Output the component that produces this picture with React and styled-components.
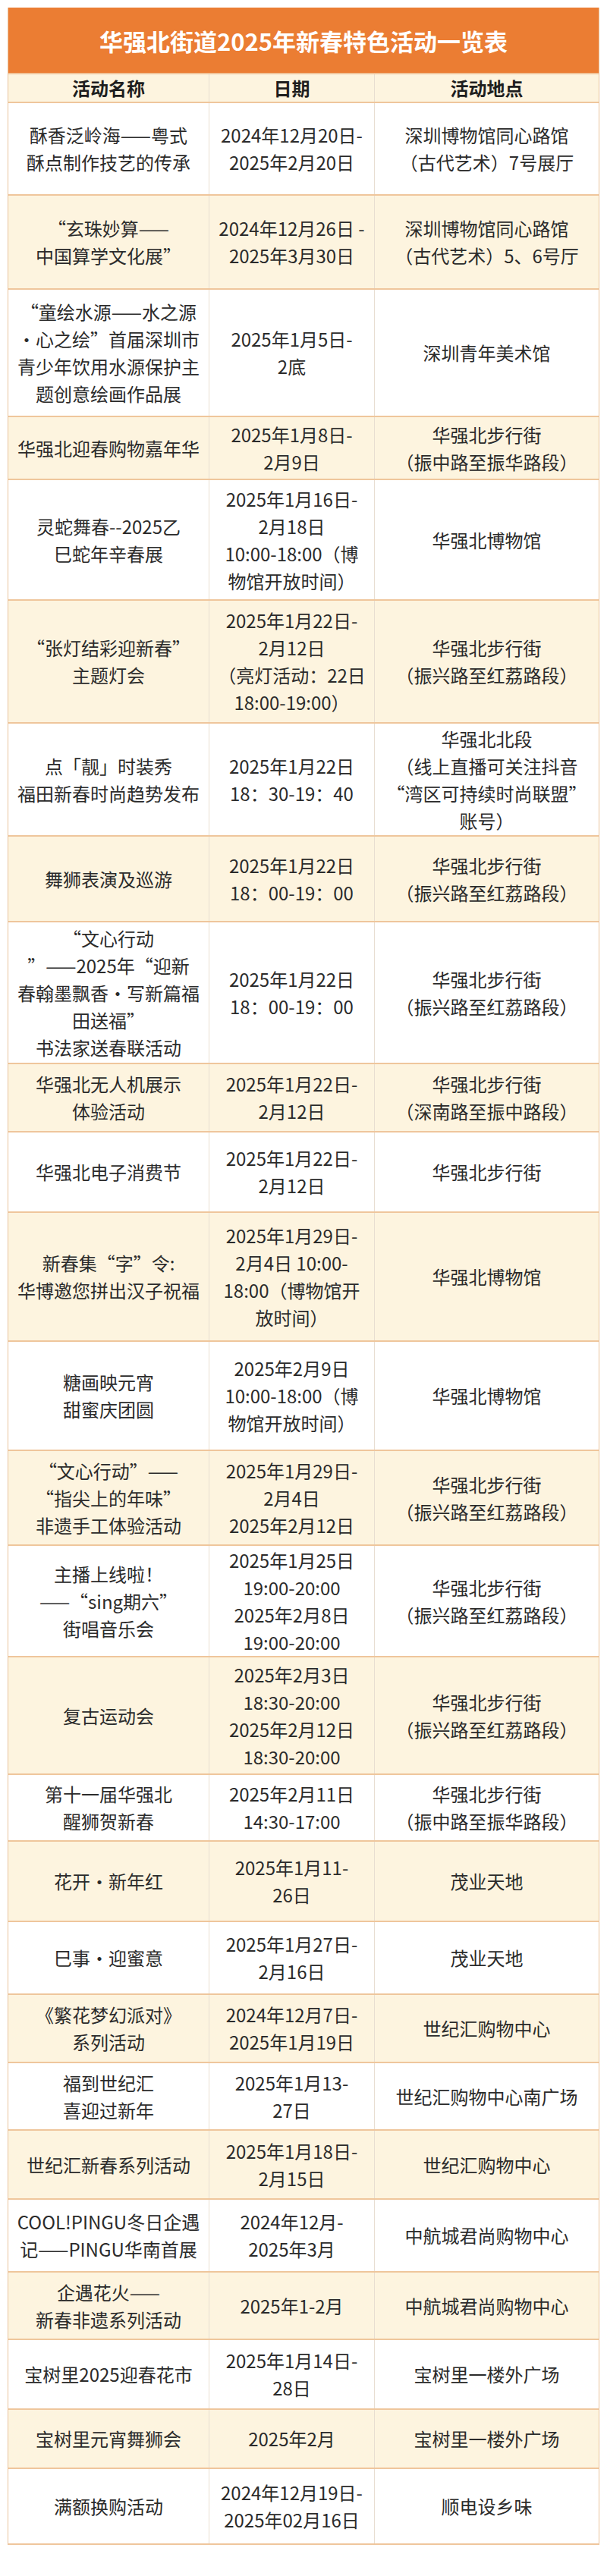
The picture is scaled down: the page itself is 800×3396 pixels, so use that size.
import React from "react";
import styled, { createGlobalStyle } from "styled-components";

const GlobalStyle = createGlobalStyle`
  html, body {
    margin: 0;
    padding: 0;
    background: #ffffff;
  }
  body {
    font-family: "Noto Sans CJK SC", "Noto Sans", sans-serif;
  }
`;

const Page = styled.div`
  width: 800px;
  min-height: 3396px;
  padding: 10px;
  box-sizing: border-box;
  background: #ffffff;
`;

const Table = styled.div`
  width: 780px;
  border-left: 1px solid #e9c39c;
  border-right: 1px solid #e9c39c;
  box-sizing: border-box;
`;

const TitleBar = styled.div`
  height: 88px;
  background: #eb7d33;
  display: flex;
  align-items: center;
  justify-content: center;
  color: #ffffff;
  font-size: 31px;
  font-weight: 700;
  letter-spacing: 0;
  border-bottom: 2px solid #f0c49a;
  box-sizing: border-box;
`;

const Row = styled.div`
  display: grid;
  grid-template-columns: 265px 218px 1fr;
  height: ${(p) => p.$h}px;
  background: ${(p) => (p.$cream ? "#fdf4df" : "#ffffff")};
  border-bottom: 2px solid #efc69c;
  box-sizing: border-box;
`;

const Cell = styled.div`
  display: flex;
  flex-direction: column;
  align-items: center;
  justify-content: center;
  text-align: center;
  color: ${(p) => (p.$head ? "#1e1e1e" : "#2b2b2b")};
  font-size: 24px;
  font-weight: ${(p) => (p.$head ? 700 : 400)};
  line-height: 36px;
  white-space: nowrap;
  border-right: ${(p) => (p.$last ? "none" : "1px solid #e8ded1")};
  box-sizing: border-box;
`;

const Line = styled.span`
  display: block;
`;

const rows = [
  { h: 122, name: ["酥香泛岭海——粤式", "酥点制作技艺的传承"], date: ["2024年12月20日-", "2025年2月20日"], place: ["深圳博物馆同心路馆", "（古代艺术）7号展厅"] },
  { h: 124, name: ["“玄珠妙算——", "中国算学文化展”"], date: ["2024年12月26日 -", "2025年3月30日"], place: ["深圳博物馆同心路馆", "（古代艺术）5、6号厅"] },
  { h: 168, name: ["“童绘水源——水之源", "•心之绘”首届深圳市", "青少年饮用水源保护主", "题创意绘画作品展"], date: ["2025年1月5日-", "2底"], place: ["深圳青年美术馆"] },
  { h: 83, name: ["华强北迎春购物嘉年华"], date: ["2025年1月8日-", "2月9日"], place: ["华强北步行街", "（振中路至振华路段）"] },
  { h: 159, name: ["灵蛇舞春--2025乙", "巳蛇年辛春展"], date: ["2025年1月16日-", "2月18日", "10:00-18:00（博", "物馆开放时间）"], place: ["华强北博物馆"] },
  { h: 162, name: ["“张灯结彩迎新春”", "主题灯会"], date: ["2025年1月22日-", "2月12日", "（亮灯活动：22日", "18:00-19:00）"], place: ["华强北步行街", "（振兴路至红荔路段）"] },
  { h: 149, name: ["点「靓」时装秀", "福田新春时尚趋势发布"], date: ["2025年1月22日", "18：30-19：40"], place: ["华强北北段", "（线上直播可关注抖音", "“湾区可持续时尚联盟”", "账号）"] },
  { h: 113, name: ["舞狮表演及巡游"], date: ["2025年1月22日", "18：00-19：00"], place: ["华强北步行街", "（振兴路至红荔路段）"] },
  { h: 187, name: ["“文心行动", "”——2025年“迎新", "春翰墨飘香·写新篇福", "田送福”", "书法家送春联活动"], date: ["2025年1月22日", "18：00-19：00"], place: ["华强北步行街", "（振兴路至红荔路段）"] },
  { h: 90, name: ["华强北无人机展示", "体验活动"], date: ["2025年1月22日-", "2月12日"], place: ["华强北步行街", "（深南路至振中路段）"] },
  { h: 106, name: ["华强北电子消费节"], date: ["2025年1月22日-", "2月12日"], place: ["华强北步行街"] },
  { h: 170, name: ["新春集“字”令:", "华博邀您拼出汉子祝福"], date: ["2025年1月29日-", "2月4日 10:00-", "18:00（博物馆开", "放时间）"], place: ["华强北博物馆"] },
  { h: 144, name: ["糖画映元宵", "甜蜜庆团圆"], date: ["2025年2月9日", "10:00-18:00（博", "物馆开放时间）"], place: ["华强北博物馆"] },
  { h: 125, name: ["“文心行动”——", "“指尖上的年味”", "非遗手工体验活动"], date: ["2025年1月29日-", "2月4日", "2025年2月12日"], place: ["华强北步行街", "（振兴路至红荔路段）"] },
  { h: 147, name: ["主播上线啦！", "——“sing期六”", "街唱音乐会"], date: ["2025年1月25日", "19:00-20:00", "2025年2月8日", "19:00-20:00"], place: ["华强北步行街", "（振兴路至红荔路段）"] },
  { h: 155, name: ["复古运动会"], date: ["2025年2月3日", "18:30-20:00", "2025年2月12日", "18:30-20:00"], place: ["华强北步行街", "（振兴路至红荔路段）"] },
  { h: 88, name: ["第十一届华强北", "醒狮贺新春"], date: ["2025年2月11日", "14:30-17:00"], place: ["华强北步行街", "（振中路至振华路段）"] },
  { h: 106, name: ["花开·新年红"], date: ["2025年1月11-", "26日"], place: ["茂业天地"] },
  { h: 96, name: ["巳事·迎蜜意"], date: ["2025年1月27日-", "2月16日"], place: ["茂业天地"] },
  { h: 90, name: ["《繁花梦幻派对》", "系列活动"], date: ["2024年12月7日-", "2025年1月19日"], place: ["世纪汇购物中心"] },
  { h: 89, name: ["福到世纪汇", "喜迎过新年"], date: ["2025年1月13-", "27日"], place: ["世纪汇购物中心南广场"] },
  { h: 91, name: ["世纪汇新春系列活动"], date: ["2025年1月18日-", "2月15日"], place: ["世纪汇购物中心"] },
  { h: 96, name: ["COOL!PINGU冬日企遇", "记——PINGU华南首展"], date: ["2024年12月-", "2025年3月"], place: ["中航城君尚购物中心"] },
  { h: 89, name: ["企遇花火——", "新春非遗系列活动"], date: ["2025年1-2月"], place: ["中航城君尚购物中心"] },
  { h: 92, name: ["宝树里2025迎春花市"], date: ["2025年1月14日-", "28日"], place: ["宝树里一楼外广场"] },
  { h: 78, name: ["宝树里元宵舞狮会"], date: ["2025年2月"], place: ["宝树里一楼外广场"] },
  { h: 100, name: ["满额换购活动"], date: ["2024年12月19日-", "2025年02月16日"], place: ["顺电设乡味"] },
];

const Lines = ({ items }) => items.map((t, i) => <Line key={i}>{t}</Line>);

const App = () => {
  return (
    <Page>
      <GlobalStyle />
      <Table>
        <TitleBar>华强北街道2025年新春特色活动一览表</TitleBar>
        <Row $h={38} $cream>
          <Cell $head>活动名称</Cell>
          <Cell $head>日期</Cell>
          <Cell $head $last>活动地点</Cell>
        </Row>
        {rows.map((r, i) => (
          <Row key={i} $h={r.h} $cream={i % 2 === 1}>
            <Cell>
              <Lines items={r.name} />
            </Cell>
            <Cell>
              <Lines items={r.date} />
            </Cell>
            <Cell $last>
              <Lines items={r.place} />
            </Cell>
          </Row>
        ))}
      </Table>
    </Page>
  );
};

export default App;
